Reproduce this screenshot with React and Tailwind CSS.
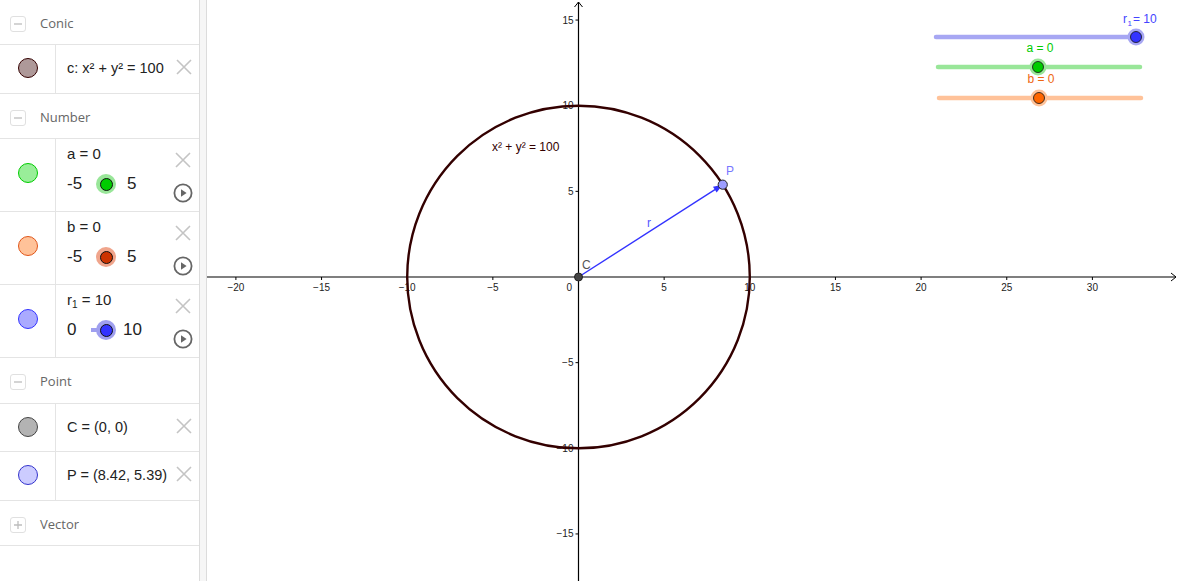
import React from 'react';

const font = { fontFamily: '"Liberation Sans", Arial, sans-serif' };

const Cross = () => (
  <svg width="18" height="18" viewBox="0 0 18 18" className="shrink-0">
    <path d="M2 2 L16 16 M16 2 L2 16" stroke="#c4c4c4" strokeWidth="1.6" fill="none" />
  </svg>
);

const Play = () => (
  <svg width="20" height="20" viewBox="0 0 20 20" className="shrink-0">
    <circle cx="10" cy="10" r="8.6" stroke="#666" strokeWidth="1.8" fill="white" />
    <path d="M8 6.2 L13.6 10 L8 13.8 Z" fill="#666" />
  </svg>
);

const Toggle = ({ plus }) => (
  <div className="w-[16px] h-[16px] rounded-[3px] border border-[#e0e0e0] flex items-center justify-center">
    <svg width="10" height="10" viewBox="0 0 10 10">
      <path d={plus ? 'M1 5 H9 M5 1 V9' : 'M1 5 H9'} stroke="#bdbdbd" strokeWidth="1.3" />
    </svg>
  </div>
);

const Header = ({ label, plus, h }) => (
  <div className={`flex items-center pt-[3px] border-b border-[#e4e4e4] ${h}`}>
    <div className="pl-[10px] w-[40px]">
      <Toggle plus={plus} />
    </div>
    <span className="text-[13px] text-[#666]" style={{ fontFamily: '"Open Sans", sans-serif' }}>{label}</span>
  </div>
);

const Dot = ({ fill, stroke }) => (
  <div className="w-[56px] shrink-0 border-r border-[#e4e4e4] flex justify-center pt-[13px]">
    <div className="w-[20px] h-[20px] rounded-full border" style={{ background: fill, borderColor: stroke }} />
  </div>
);

const ItemRow = ({ fill, stroke, children, h }) => (
  <div className={`flex border-b border-[#e4e4e4] ${h}`}>
    <Dot fill={fill} stroke={stroke} />
    <div className="flex-1 flex justify-between pl-[11px] pr-[6px] pt-[13px]">
      <div className="text-[14.5px] text-[#222] leading-[20px] whitespace-nowrap" style={font}>{children}</div>
      <Cross />
    </div>
  </div>
);

const SliderRow = ({ fill, stroke, title, min, max, knob, halo, track, gap }) => (
  <div className="flex border-b border-[#e4e4e4] h-[73px]">
    <div className="w-[56px] shrink-0 border-r border-[#e4e4e4] flex justify-center pt-[24px]">
      <div className="w-[20px] h-[20px] rounded-full border" style={{ background: fill, borderColor: stroke }} />
    </div>
    <div className="flex-1 flex justify-between pl-[11px] pr-[6px] pt-[5px]">
      <div style={font} className="text-[#222] whitespace-nowrap">
        <div className="text-[15px] leading-[20px]">{title}</div>
        <div className="flex items-center mt-[10px] text-[17px] leading-[20px]">
          <span className="w-[24px]">{min}</span>
          <div className="relative w-[26px] h-[20px]">
            {track && <div className="absolute left-[0px] top-[8px] w-[16px] h-[4px] bg-[#9f9fef]" />}
            <div className="absolute left-[5px] top-[0px] w-[20px] h-[20px] rounded-full flex items-center justify-center" style={{ background: halo }}>
              <div className="w-[13px] h-[13px] rounded-full border border-[#111]" style={{ background: knob }} />
            </div>
          </div>
          <span className={gap}>{max}</span>
        </div>
      </div>
      <div className="flex flex-col items-center justify-between pt-[7px] pb-[8px]">
        <Cross />
        <Play />
      </div>
    </div>
  </div>
);

const ox = 578.5;
const oy = 277;
const s = 17.13;
const xt = [-20, -15, -10, -5, 5, 10, 15, 20, 25, 30];
const yt = [-15, -10, -5, 5, 10, 15];

const Graph = () => {
  const px = ox + 8.42 * s;
  const py = oy - 5.39 * s;
  const ang = Math.atan2(py - oy, px - ox);
  const ah = 10;
  const a1x = px - ah * Math.cos(ang - 0.35);
  const a1y = py - ah * Math.sin(ang - 0.35);
  const a2x = px - ah * Math.cos(ang + 0.35);
  const a2y = py - ah * Math.sin(ang + 0.35);
  return (
    <svg className="w-full h-full block" viewBox="207 0 972 581" style={{ fontFamily: '"Liberation Sans", Arial, sans-serif' }}>
      {/* axes */}
      <line x1="207" y1={oy} x2="1176" y2={oy} stroke="#000" strokeWidth="1.2" />
      <path d={`M1171 ${oy - 4} L1176 ${oy} L1171 ${oy + 4}`} stroke="#000" fill="none" strokeWidth="1" />
      <line x1={ox} y1="2" x2={ox} y2="581" stroke="#000" strokeWidth="1.2" />
      <path d={`M${ox - 4} 7 L${ox} 2 L${ox + 4} 7`} stroke="#000" fill="none" strokeWidth="1" />
      {xt.map(k => {
        const x = ox + k * s;
        return (
          <g key={'x' + k}>
            <line x1={x} y1={oy} x2={x} y2={oy + 3} stroke="#000" />
            <text x={x} y={oy + 14} fontSize="10" textAnchor="middle" fill="#222">
              {k < 0 ? '\u2212' + -k : k}
            </text>
          </g>
        );
      })}
      <text x={ox - 12} y={oy + 14} fontSize="10" fill="#222">0</text>
      {yt.map(k => {
        const y = oy - k * s;
        return (
          <g key={'y' + k}>
            <line x1={ox - 3} y1={y} x2={ox} y2={y} stroke="#000" />
            <text x={ox - 5} y={y + 3.5} fontSize="10" textAnchor="end" fill="#222">
              {k < 0 ? '\u2212' + -k : k}
            </text>
          </g>
        );
      })}
      {/* circle */}
      <circle cx={ox} cy={oy} r={10 * s} stroke="#330000" strokeWidth="2.4" fill="none" />
      <text x="492" y="151" fontSize="12" fill="#330000">x² + y² = 100</text>
      {/* vector */}
      <line x1={ox} y1={oy} x2={px - 6 * Math.cos(ang)} y2={py - 6 * Math.sin(ang)} stroke="#3333ff" strokeWidth="1.4" />
      <path d={`M${px} ${py} L${a1x} ${a1y} L${a2x} ${a2y} Z`} fill="#3333ff" />
      <text x="647" y="227" fontSize="12" fill="#5555ff">r</text>
      {/* points */}
      <circle cx={ox} cy={oy} r="4" fill="#444" stroke="#222" />
      <text x="582" y="269" fontSize="12" fill="#555">C</text>
      <circle cx={px} cy={py} r="4.6" fill="#9d9dff" stroke="#222" strokeWidth="1" />
      <text x="726" y="175" fontSize="12" fill="#7777ff">P</text>
      {/* sliders */}
      <line x1="936" y1="37" x2="1136" y2="37" stroke="#a7a7f3" strokeWidth="4.5" strokeLinecap="round" />
      <circle cx="1136" cy="37" r="8.5" fill="#a7a7f3" />
      <circle cx="1136" cy="37" r="5.5" fill="#3333ff" stroke="#111" strokeWidth="0.8" />
      <text x="1123" y="23" fontSize="12" fill="#4444ff">r</text>
      <text x="1127.5" y="26" fontSize="8" fill="#4444ff">1</text>
      <text x="1133" y="23" fontSize="12" fill="#4444ff"> = 10</text>

      <line x1="938" y1="67" x2="1140" y2="67" stroke="#99e699" strokeWidth="4.5" strokeLinecap="round" />
      <circle cx="1038" cy="67" r="8.5" fill="#99e699" />
      <circle cx="1038" cy="67" r="5.5" fill="#00cc00" stroke="#111" strokeWidth="0.8" />
      <text x="1040" y="52" fontSize="12" fill="#00cc00" textAnchor="middle">a = 0</text>

      <line x1="939" y1="98" x2="1141" y2="98" stroke="#ffc299" strokeWidth="4.5" strokeLinecap="round" />
      <circle cx="1039" cy="98" r="8.5" fill="#ffc299" />
      <circle cx="1039" cy="98" r="5.5" fill="#ff6600" stroke="#111" strokeWidth="0.8" />
      <text x="1041" y="83" fontSize="12" fill="#ee6611" textAnchor="middle">b = 0</text>
    </svg>
  );
};

export default function App() {
  return (
    <div className="flex w-[1179px] h-[581px] bg-white overflow-hidden">
      <div className="w-[199px] shrink-0 flex flex-col">
        <Header label="Conic" h="h-[45px]" />
        <ItemRow fill="#ae9999" stroke="#330000" h="h-[49px]">
          c: x² + y² = 100
        </ItemRow>
        <Header label="Number" h="h-[45px]" />
        <SliderRow fill="#99ee99" stroke="#00cc00" title="a = 0" min="-5" max="5" knob="#00cc00" halo="#99e699" gap="ml-[10px]" />
        <SliderRow fill="#ffc299" stroke="#e0561a" title="b = 0" min="-5" max="5" knob="#cc3300" halo="#f0a58c" gap="ml-[10px]" />
        <SliderRow
          fill="#aaaaff"
          stroke="#3333ff"
          title={<span>r<sub className="text-[10px]">1</sub> = 10</span>}
          min="0"
          max="10"
          knob="#3333ff"
          halo="#9f9fef"
          track
          gap="ml-[6px]"
        />
        <Header label="Point" h="h-[46px]" />
        <ItemRow fill="#b3b3b3" stroke="#444" h="h-[48px]">
          C = (0, 0)
        </ItemRow>
        <ItemRow fill="#ccccff" stroke="#3333cc" h="h-[49px]">
          P = (8.42, 5.39)
        </ItemRow>
        <Header label="Vector" plus h="h-[45px]" />
      </div>
      <div className="w-[8px] shrink-0 bg-[#f6f6f6] border-x border-[#dcdcdc]" />
      <div className="flex-1 h-full">
        <Graph />
      </div>
    </div>
  );
}
